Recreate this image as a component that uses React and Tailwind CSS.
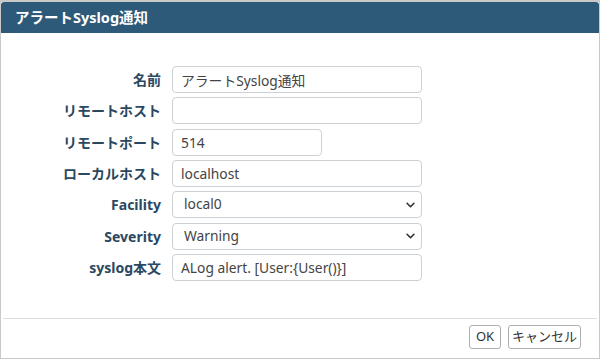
import React from 'react'

const font = { fontFamily: '"Noto Sans", "Noto Sans CJK JP", sans-serif' }

const Chevron = () => (
    <svg className="absolute right-[6px] top-1/2 -translate-y-1/2 w-[11px] h-[11px] pointer-events-none" viewBox="0 0 16 16" fill="none">
        <path d="M3 5.5l5 5 5-5" stroke="#333" strokeWidth="2.4" strokeLinecap="round" strokeLinejoin="round" />
    </svg>
)

const Label = ({ children }) => (
    <label className="text-right text-[14px] font-bold text-[#2b4861] leading-[27px] whitespace-nowrap">{children}</label>
)

const TextInput = ({ value, wide = true }) => (
    <input
        type="text"
        defaultValue={value}
        className={(wide ? 'w-[250px]' : 'w-[150px]') + ' h-[27px] border border-[#ccd1d6] rounded-[4px] px-[8px] text-[13.8px] text-[#444] bg-white outline-none'}
    />
)

const Select = ({ value, options }) => (
    <div className="relative w-[250px] h-[27px]">
        <select
            defaultValue={value}
            className="appearance-none w-full h-full border border-[#ccd1d6] rounded-[4px] pl-[11px] pr-[20px] text-[13.8px] text-[#444] bg-white outline-none"
        >
            {options.map((o) => <option key={o}>{o}</option>)}
        </select>
        <Chevron />
    </div>
)

const App = () => {
    return (
        <div className="w-[600px] h-[359px] bg-white border-x border-t-2 border-b border-[#c9c9c9] flex flex-col" style={font}>
            <div className="h-[31px] bg-[#2e5a7a] rounded-t-[3px] flex items-center pl-[14px]">
                <h1 className="text-white text-[14.5px] font-bold">アラートSyslog通知</h1>
            </div>

            <div className="flex-1 pt-[33px]">
                <div className="grid grid-cols-[160px_250px] gap-x-[11px] gap-y-[4.33px] items-center">
                    <Label>名前</Label>
                    <TextInput value="アラートSyslog通知" />
                    <Label>リモートホスト</Label>
                    <TextInput value="" />
                    <Label>リモートポート</Label>
                    <TextInput value="514" wide={false} />
                    <Label>ローカルホスト</Label>
                    <TextInput value="localhost" />
                    <Label>Facility</Label>
                    <Select value="local0" options={['local0', 'local1', 'local2', 'local3', 'local4', 'local5', 'local6', 'local7']} />
                    <Label>Severity</Label>
                    <Select value="Warning" options={['Emergency', 'Alert', 'Critical', 'Error', 'Warning', 'Notice', 'Informational', 'Debug']} />
                    <Label>syslog本文</Label>
                    <TextInput value="ALog alert. [User:{User()}]" />
                </div>
            </div>

            <div className="h-[40px] mx-[2px] border-t border-[#dcdcdc] flex justify-end items-start pt-[6px] pr-[16px] gap-[7px]">
                <button type="button" className="w-[32px] h-[24px] border border-[#b0b0b0] rounded-[3px] bg-white text-[13px] text-[#333]">OK</button>
                <button type="button" className="w-[73px] h-[24px] border border-[#b0b0b0] rounded-[3px] bg-white text-[13px] text-[#333]">キャンセル</button>
            </div>
        </div>
    )
}

export default App
